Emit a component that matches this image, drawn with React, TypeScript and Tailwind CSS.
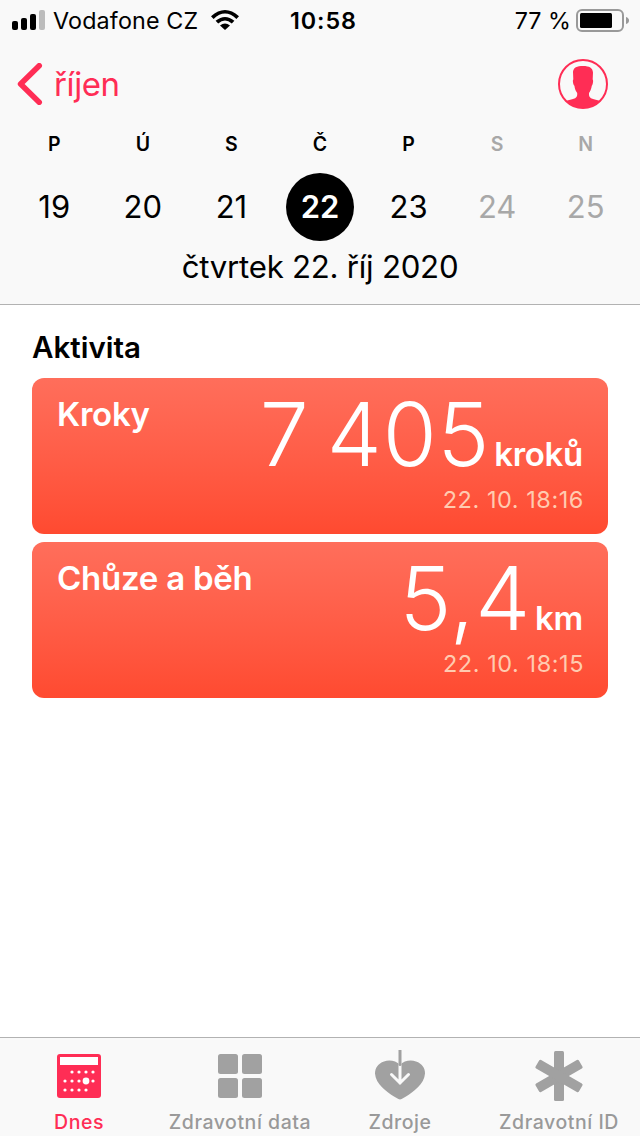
import type { ReactNode } from "react";

const days = [
  { label: "P", date: 19 },
  { label: "Ú", date: 20 },
  { label: "S", date: 21 },
  { label: "Č", date: 22, selected: true },
  { label: "P", date: 23 },
  { label: "S", date: 24, disabled: true },
  { label: "N", date: 25, disabled: true },
];

function StatusBar() {
  return (
    <div className="flex h-[41px] items-center whitespace-nowrap text-[23.3px] leading-none">
      <div className="flex w-[290px] items-center pl-3">
        <svg width="34" height="20" viewBox="0 0 34 20">
          <rect x="0" y="11" width="6" height="9" rx="2" />
          <rect x="9" y="8" width="6" height="12" rx="2" />
          <rect x="18" y="4" width="6" height="16" rx="2" />
          <rect x="27" y="0" width="6" height="20" rx="2" fill="#bcbcbc" />
        </svg>
        <span className="ml-[7px] w-[146px] tracking-[0.15px]">Vodafone CZ</span>
        <svg className="ml-3" width="28" height="20" viewBox="0 0 28 20">
          <path d="M0 6.2Q14 -6.2 28 6.2L25.4 9Q14 -1.8 2.6 9Z" />
          <path d="M4.6 10.8Q14 3 23.4 10.8L20.8 13.5Q14 7.5 7.2 13.5Z" />
          <path d="M9 15.4Q14 11.4 19 15.4L14 20Z" />
        </svg>
      </div>
      <span className="font-semibold tracking-[0.95px]">10:58</span>
      <div className="ml-auto flex items-center pr-[10px]">
        <span>77 %</span>
        <svg className="ml-[5px]" width="54" height="24" viewBox="0 0 54 24">
          <rect x="1" y="1" width="46" height="21" rx="5" fill="none" stroke="#999" strokeWidth="2" />
          <rect x="4" y="4" width="32" height="15" rx="1.5" />
          <path d="M50 8Q53 9 53 11.5Q53 14 50 15Z" fill="#999" />
        </svg>
      </div>
    </div>
  );
}

function NavBar() {
  return (
    <div className="flex h-[86px] items-center justify-between pr-8 pl-[17px] text-[#ff2d55]">
      <div className="flex items-center">
        <svg width="26" height="42" viewBox="0 0 26 42" fill="none" stroke="currentColor" strokeWidth="5.6" strokeLinecap="round" strokeLinejoin="round">
          <path d="M22.2 2.8L3.6 21L22.2 39.2" />
        </svg>
        <span className="ml-[11px] text-[33px] leading-none tracking-[-0.4px]">říjen</span>
      </div>
      <svg width="50" height="50" viewBox="0 0 50 50">
        <circle cx="25" cy="25" r="24" fill="none" stroke="currentColor" strokeWidth="2" />
        <path
          fill="currentColor"
          d="M15 13C15.3 8.5 19 7 25 7C31.5 7 34.7 9 35 13.5L34.7 20.5C35.6 21 34.9 26 33.8 26.7C33.3 30 32.2 32.4 31 34V36C31.2 40 36 40 42 42A24.5 24.5 0 0 1 8 42C14 40 19 40 19.2 36V34C17.8 32 16.8 30 16.4 26.7C15 26 14.4 21 15.3 20.5Z"
        />
      </svg>
    </div>
  );
}

function WeekPicker() {
  return (
    <div className="grid grid-cols-7 px-[10px] text-center">
      {days.map((day) => (
        <div key={day.date} className={`flex flex-col items-center ${day.disabled ? "text-[#a8a8a8]" : "text-black"}`}>
          <span className="h-[34px] text-[19.5px] leading-[34px] font-semibold">{day.label}</span>
          <span
            className={`mt-3 flex size-[68px] items-center justify-center rounded-full pb-px text-[31px] leading-none ${
              day.selected ? "bg-black font-semibold text-white" : ""
            }`}
          >
            {day.date}
          </span>
        </div>
      ))}
    </div>
  );
}

function ActivityCard({ title, value, unit, time }: { title: string; value: string; unit: string; time: string }) {
  return (
    <div className="flex h-[156px] justify-between rounded-xl bg-linear-to-b from-[#ff6e5b] to-[#ff4a30] px-[25px] whitespace-nowrap text-white">
      <h3 className="pt-4 text-[33px] leading-10 font-semibold tracking-[-0.25px]">{title}</h3>
      <div className="flex flex-col items-end">
        <div className="flex items-baseline">
          <span className="text-[87.5px] leading-[112px] font-light tracking-[0.8px] [word-spacing:-8px]">{value}</span>
          <span className="ml-[4px] text-[33px] leading-none font-semibold tracking-[-0.3px]">{unit}</span>
        </div>
        <span className="-mt-1 -mr-px text-[23.5px] leading-7 tracking-[0.55px] text-[#ffcbb0]">{time}</span>
      </div>
    </div>
  );
}

function Tab({ label, active, children }: { label: string; active?: boolean; children: ReactNode }) {
  return (
    <div className={`flex flex-col items-center ${active ? "text-[#ff2d55]" : "text-[#999]"}`}>
      <svg className="mt-3" width="52" height="52" viewBox="0 0 52 52" fill="none">
        {children}
      </svg>
      <span className="mt-[6px] text-[19.5px] leading-7 font-medium tracking-[0.55px] whitespace-nowrap">{label}</span>
    </div>
  );
}

function TabBar() {
  return (
    <nav className="grid h-[99px] grid-cols-[158px_164px_156px_162px] border-t border-[#b2b2b2] bg-[#f9f9f9]">
      <Tab label="Dnes" active>
        <rect x="4" y="4" width="44" height="44" rx="3" fill="#ff2d55" />
        <rect x="7" y="7" width="38" height="8" fill="#fff" />
        <g fill="#fff">
          {[19, 26, 33, 40].map((x) => <circle key={x} cx={x} cy="22" r="1.6" />)}
          {[12, 19, 26, 40].map((x) => <circle key={x} cx={x} cy="31" r="1.6" />)}
          {[12, 19, 26, 33].map((x) => <circle key={x} cx={x} cy="40" r="1.6" />)}
          <circle cx="33" cy="31" r="3.4" />
        </g>
      </Tab>
      <Tab label="Zdravotní data">
        <g fill="#a1a1a1">
          <rect x="4" y="4" width="20" height="20" rx="2.5" />
          <rect x="28" y="4" width="20" height="20" rx="2.5" />
          <rect x="4" y="28" width="20" height="20" rx="2.5" />
          <rect x="28" y="28" width="20" height="20" rx="2.5" />
        </g>
      </Tab>
      <Tab label="Zdroje">
        <path
          d="M26 15C22 10.5 15 9.5 10 11.5C4 13.500 1 18 1 23.500C1.500 34 13 42 20 46.500Q24 49 26 49.500Q28 49 32 46.500C39 42 50.500 34 51 23.500C51 18 48 13.500 42 11.500C37 9.500 30 10.500 26 15Z"
          fill="#a1a1a1"
        />
        <path d="M26 14V33M17.5 24.5L26 33L34.5 24.5" stroke="#f9f9f9" strokeWidth="3" strokeLinecap="round" />
        <path d="M26 0.5V14.5" stroke="#a1a1a1" strokeWidth="3" strokeLinecap="round" />
      </Tab>
      <Tab label="Zdravotní ID">
        <g fill="#a1a1a1">
          <rect x="21" y="1" width="10" height="50" rx="1.5" />
          <rect x="21" y="1" width="10" height="50" rx="1.5" transform="rotate(60 26 26)" />
          <rect x="21" y="1" width="10" height="50" rx="1.5" transform="rotate(-60 26 26)" />
        </g>
      </Tab>
    </nav>
  );
}

export default function App() {
  return (
    <div className="flex h-[1136px] w-[640px] flex-col overflow-hidden bg-white font-['Inter',sans-serif] text-black">
      <header className="h-[305px] border-b border-[#b2b2b2] bg-[#f9f9f9]">
        <StatusBar />
        <NavBar />
        <WeekPicker />
        <p className="mt-[6px] text-center text-[31.2px] leading-10 tracking-[-0.25px]">čtvrtek 22. říj 2020</p>
      </header>
      <main className="flex-1 px-8 pt-[22px]">
        <h2 className="text-[29.5px] leading-10 font-semibold">Aktivita</h2>
        <div className="mt-[11px] flex flex-col gap-2">
          <ActivityCard title="Kroky" value="7 405" unit="kroků" time="22. 10. 18:16" />
          <ActivityCard title="Chůze a běh" value="5,4" unit="km" time="22. 10. 18:15" />
        </div>
      </main>
      <TabBar />
    </div>
  );
}
